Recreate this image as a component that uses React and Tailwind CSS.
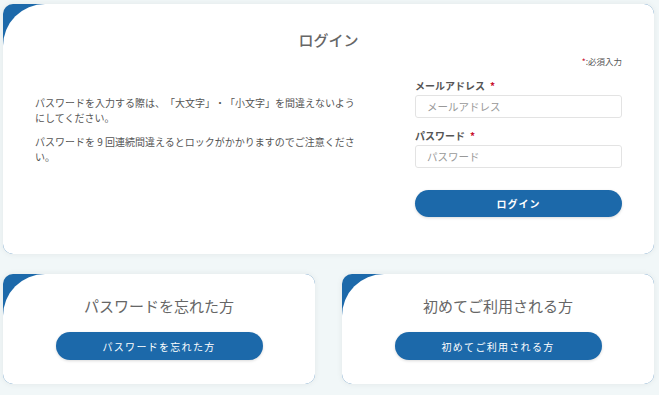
import React from "react";

function Card({ className = "", children }) {
  return (
    <div
      className={`overflow-hidden rounded-[10px] bg-[#1c69aa] shadow-[0_0_6px_rgba(0,0,0,0.07)] ${className}`}
    >
      <div className="h-full w-full rounded-tl-[42px] bg-white">{children}</div>
    </div>
  );
}

function Field({ label, placeholder, type = "text" }) {
  return (
    <div className="flex flex-col">
      <label className="text-[10px] font-bold leading-[16px] text-[#555]">
        {label}
        <span className="ml-[5px] text-[#c8102e]">*</span>
      </label>
      <input
        type={type}
        placeholder={placeholder}
        className="mt-[1px] h-[23px] w-full rounded-[3px] border border-[#e3e3e3] px-[11px] text-[10.5px] text-[#555] outline-none placeholder:text-[#999]"
      />
    </div>
  );
}

function PillButton({ children, className = "" }) {
  return (
    <button
      className={`flex w-[207px] items-center justify-center rounded-full bg-[#1c69aa] text-white shadow-[0_1px_3px_rgba(0,0,0,0.15)] ${className}`}
    >
      {children}
    </button>
  );
}

export default function App() {
  return (
    <div
      className="min-h-[395px] bg-[#f1f7f8] pt-[4px] pl-[3px] pr-[5px]"
      style={{ fontFamily: '"Noto Sans CJK JP", "Noto Sans", sans-serif' }}
    >
      <Card className="h-[250px]">
        <div className="flex flex-col px-8 pt-[26px]">
          <h1 className="text-center text-[15px] font-medium leading-[20px] text-[#666]">
            ログイン
          </h1>
          <div className="flex justify-between">
            <div className="mt-[45px] w-[325px] text-[10px] leading-[15px] text-[#555] [text-spacing-trim:space-all]">
              <p>パスワードを入力する際は、「大文字」・「小文字」を間違えないようにしてください。</p>
              <p className="mt-[9px]">
                パスワードを 9 回連続間違えるとロックがかかりますのでご注意ください。
              </p>
            </div>
            <div className="flex w-[207px] flex-col">
              <p className="mt-[5px] text-right text-[8.5px] leading-[12px] text-[#555]">
                <span className="text-[#c8102e]">*</span>:必須入力
              </p>
              <div className="mt-[11px] flex flex-col gap-[10px]">
                <Field label="メールアドレス" placeholder="メールアドレス" />
                <Field label="パスワード" placeholder="パスワード" type="password" />
              </div>
              <PillButton className="mt-[22px] h-[27px] text-[10px] font-bold tracking-[1px]">
                ログイン
              </PillButton>
            </div>
          </div>
        </div>
      </Card>

      <div className="mt-[20px] flex gap-[27px]">
        <Card className="h-[110px] w-[312px]">
          <div className="flex flex-col items-center pt-[22px]">
            <h2 className="text-[15px] leading-[20px] text-[#666]">パスワードを忘れた方</h2>
            <PillButton className="mt-[16px] h-[28px] text-[10px] font-normal tracking-[1.3px]">
              パスワードを忘れた方
            </PillButton>
          </div>
        </Card>
        <Card className="h-[110px] w-[312px]">
          <div className="flex flex-col items-center pt-[22px]">
            <h2 className="text-[15px] leading-[20px] text-[#666]">初めてご利用される方</h2>
            <PillButton className="mt-[16px] h-[28px] text-[10px] font-normal tracking-[1.3px]">
              初めてご利用される方
            </PillButton>
          </div>
        </Card>
      </div>
    </div>
  );
}
